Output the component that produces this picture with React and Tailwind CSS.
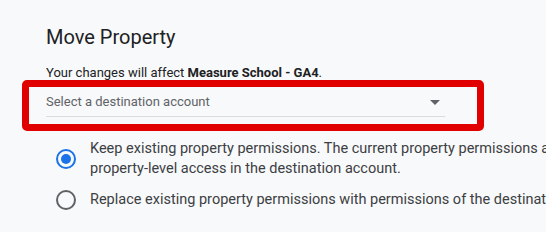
import React from 'react';

function Radio({ checked }) {
  return (
    <div className="w-[20px] h-[20px] shrink-0 flex items-center justify-center">
      <div
        className={`w-[20px] h-[20px] rounded-full border-2 flex items-center justify-center ${
          checked ? 'border-[#1a73e8]' : 'border-[#5f6368]'
        }`}
      >
        {checked && <div className="w-[10px] h-[10px] rounded-full bg-[#1a73e8]" />}
      </div>
    </div>
  );
}

export default function App() {
  return (
    <div
      className="w-[546px] h-[232px] bg-[#f8f9fa] overflow-hidden pl-[46px] pt-[23px] text-[#3c4043]"
      style={{ fontFamily: 'Roboto, "Liberation Sans", sans-serif' }}
    >
      <h1 className="text-[20px] leading-[28px] text-[#202124] whitespace-nowrap">Move Property</h1>

      <p className="mt-[13px] text-[13px] leading-[18px] text-[#202124] whitespace-nowrap">
        Your changes will affect <span className="font-bold">Measure School - GA4</span>.
      </p>

      {/* highlight box round the dropdown */}
      <div className="ml-[-24px] mt-[-2px] w-[462px] h-[51px] border-[7px] border-[#e00000] rounded-[5px] pl-[17px] pr-[32px]">
        <div className="h-[30px] border-b border-[#dadce0] flex items-center justify-between pr-[5px]">
          <span className="text-[13px] text-[#5f6368] whitespace-nowrap">Select a destination account</span>
          <svg width="10" height="5" viewBox="0 0 10 5" className="mt-[2px]">
            <path d="M0 0 L10 0 L5 5 Z" fill="#5f6368" />
          </svg>
        </div>
      </div>

      <div className="mt-[8px] ml-[10px] flex flex-col gap-[11px] text-[14.5px] leading-[20px] text-[#3c4043] whitespace-nowrap">
        <div className="flex gap-[14px] items-center">
          <Radio checked />
          <div>
            <div>Keep existing property permissions. The current property permissions are merged with</div>
            <div>property-level access in the destination account.</div>
          </div>
        </div>
        <div className="flex gap-[14px] items-center">
          <Radio />
          <div>Replace existing property permissions with permissions of the destination account.</div>
        </div>
      </div>
    </div>
  );
}
